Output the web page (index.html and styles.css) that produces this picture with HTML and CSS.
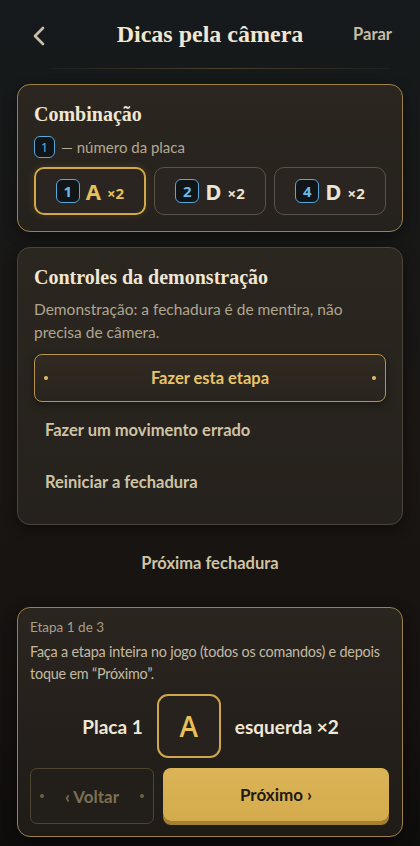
FILE: index.html
```html
<!DOCTYPE html>
<html lang="pt">
<head>
  <meta charset="UTF-8" />
  <title>Dicas pela câmera</title>
  <link rel="stylesheet" href="styles.css">
</head>
<body>
  <div class="screen">
    <header class="topbar">
      <button class="back-btn" aria-label="Voltar">
        <svg width="16" height="24" viewBox="0 0 16 24"><path d="M11 4 L3 12 L11 20" fill="none" stroke="#c9bfa6" stroke-width="2.6" stroke-linecap="round" stroke-linejoin="round"/></svg>
      </button>
      <h1>Dicas pela câmera</h1>
      <button class="stop-btn">Parar</button>
    </header>
    <div class="divider"></div>

    <main class="content">
      <section class="card card-gold combo-card">
        <h2>Combinação</h2>
        <div class="legend"><span class="badge badge-sm">1</span> — número da placa</div>
        <div class="choices">
          <button class="choice selected"><span class="badge">1</span><span class="letter">A</span><span class="times">×2</span></button>
          <button class="choice"><span class="badge">2</span><span class="letter">D</span><span class="times">×2</span></button>
          <button class="choice"><span class="badge">4</span><span class="letter">D</span><span class="times">×2</span></button>
        </div>
      </section>

      <section class="card demo-card">
        <h2>Controles da demonstração</h2>
        <p class="note">Demonstração: a fechadura é de mentira, não precisa de câmera.</p>
        <button class="outline-btn"><span class="dot"></span><span>Fazer esta etapa</span><span class="dot"></span></button>
        <button class="link-btn">Fazer um movimento errado</button>
        <button class="link-btn">Reiniciar a fechadura</button>
      </section>

      <button class="next-lock">Próxima fechadura</button>

      <section class="card card-gold step-card">
        <div class="step-count">Etapa 1 de 3</div>
        <p class="step-text">Faça a etapa inteira no jogo (todos os comandos) e depois toque em “Próximo”.</p>
        <div class="step-row">
          <span class="plate">Placa 1</span>
          <span class="key-box">A</span>
          <span class="dir">esquerda ×2</span>
        </div>
        <div class="nav-btns">
          <button class="prev-btn"><span class="dot dim"></span><span>‹ Voltar</span><span class="dot dim"></span></button>
          <button class="next-btn">Próximo ›</button>
        </div>
      </section>
    </main>
  </div>
</body>
</html>
```

FILE: styles.css
```css
body {
  margin: 0;
  font-family: Lato, "Liberation Sans", sans-serif;
  background: #121010;
  color: #efe6d3;
}

.screen {
  width: 420px;
  height: 846px;
  overflow: hidden;
  background: linear-gradient(180deg, #161a1c 0%, #171818 20%, #1a1613 55%, #141110 85%, #0f0d0c 100%);
}

button {
  font-family: inherit;
  background: none;
  border: none;
  padding: 0;
  cursor: pointer;
}

.topbar {
  display: grid;
  grid-template-columns: 60px 1fr 60px;
  align-items: center;
  height: 68px;
  padding: 0 14px 0 24px;
  box-sizing: border-box;
}

.back-btn {
  display: flex;
  align-items: center;
  height: 30px;
  padding-left: 8px;
  margin-top: 4px;
}

.topbar h1 {
  margin: 0;
  text-align: center;
  font-family: "Liberation Serif", serif;
  font-size: 24px;
  font-weight: bold;
  color: #efe6d3;
  padding-right: 10px;
}

.stop-btn {
  font-size: 16.5px;
  font-weight: bold;
  color: #c8bda2;
  text-align: right;
  padding-right: 14px;
}

.divider {
  height: 1px;
  margin: 0 30px 15px 50px;
  background: linear-gradient(90deg, rgba(120, 100, 60, 0.08), rgba(150, 125, 70, 0.4) 50%, rgba(120, 100, 60, 0.08));
}

.content {
  display: flex;
  flex-direction: column;
  padding: 0 17px;
}

.card {
  background: linear-gradient(180deg, #2b2620 0%, #25211c 100%);
  border: 1px solid #4b443a;
  border-radius: 13px;
  box-shadow: 0 4px 14px rgba(0, 0, 0, 0.45);
}

.card-gold {
  border-color: #9c8248;
}

.card h2 {
  margin: 0;
  font-family: "Liberation Serif", serif;
  font-size: 20px;
  line-height: 26px;
  font-weight: bold;
  color: #efe6d3;
}

.combo-card {
  padding: 16px 16px 16px;
}

.legend {
  display: flex;
  align-items: center;
  gap: 6px;
  margin-top: 9px;
  font-size: 15px;
  color: #b3a993;
}

.badge {
  display: inline-flex;
  align-items: center;
  justify-content: center;
  width: 24px;
  height: 24px;
  box-sizing: border-box;
  border: 1.5px solid #5aa7da;
  border-radius: 6px;
  background: #111518;
  color: #6db9ea;
  font-family: "Open Sans", sans-serif;
  font-size: 15px;
  font-weight: bold;
}

.badge-sm {
  width: 21px;
  height: 22px;
  font-size: 13px;
  font-weight: normal;
  color: #6db3e0;
}

.choices {
  display: grid;
  grid-template-columns: repeat(3, 1fr);
  gap: 8px;
  margin-top: 9px;
}

.choice {
  display: flex;
  align-items: center;
  justify-content: center;
  gap: 6px;
  height: 48px;
  border: 1px solid #5b5349;
  border-radius: 10px;
  background: #2a2520;
  color: #ece4d2;
}

.choice.selected {
  border: 2px solid #d3a948;
  color: #e8c05a;
  box-shadow: 0 0 8px rgba(211, 169, 72, 0.18);
}

.choice .letter {
  font-family: "Open Sans", sans-serif;
  font-size: 22px;
  font-weight: bold;
}

.choice .times {
  font-family: "Open Sans", sans-serif;
  font-size: 15px;
  font-weight: bold;
  margin-top: 3px;
}

.demo-card {
  display: flex;
  flex-direction: column;
  margin-top: 15px;
  padding: 16px 16px 18px;
}

.note {
  margin: 8px 0 0;
  font-size: 15.5px;
  line-height: 23px;
  color: #b0a690;
  padding-right: 20px;
}

.outline-btn {
  display: flex;
  align-items: center;
  justify-content: space-between;
  height: 48px;
  margin-top: 10px;
  padding: 0 9px;
  border: 1.5px solid #b4944f;
  border-radius: 8px;
  background: linear-gradient(180deg, #302a22, #29241e);
  color: #e8c46a;
  font-size: 16.5px;
  font-weight: bold;
  box-shadow: 0 3px 8px rgba(0, 0, 0, 0.35);
}

.dot {
  width: 4px;
  height: 4px;
  border-radius: 50%;
  background: #e2bf66;
}

.dot.dim {
  background: #6e6246;
}

.link-btn {
  height: 48px;
  margin-top: 4px;
  padding-left: 11px;
  text-align: left;
  font-size: 16.5px;
  font-weight: bold;
  color: #cfc3a5;
}

.link-btn:first-of-type {
  margin-top: 6px;
}

.next-lock {
  height: 48px;
  margin: 14px 0 20px;
  font-size: 16.5px;
  font-weight: bold;
  color: #cfc3a5;
}

.step-card {
  padding: 10px 11px 8px 12px;
  background: linear-gradient(180deg, #2a251f 0%, #1f1b17 100%);
}

.step-count {
  font-size: 13.5px;
  line-height: 18px;
  color: #a89e8a;
}

.step-text {
  margin: 5px 0 0;
  font-size: 14.4px;
  letter-spacing: -0.2px;
  line-height: 22px;
  color: #c4b9a3;
}

.step-row {
  display: flex;
  align-items: center;
  justify-content: center;
  gap: 14px;
  margin-top: 9px;
}

.plate, .dir {
  font-size: 19px;
  font-weight: bold;
  color: #f0e8d5;
}

.key-box {
  display: flex;
  align-items: center;
  justify-content: center;
  width: 64px;
  height: 64px;
  box-sizing: border-box;
  border: 2px solid #cfa64b;
  border-radius: 11px;
  background: #27221d;
  color: #e8c05a;
  font-family: "Open Sans", sans-serif;
  font-size: 28px;
  font-weight: 600;
}

.nav-btns {
  display: grid;
  grid-template-columns: 124px 1fr;
  gap: 9px;
  margin-top: 10px;
  margin-right: 2px;
  padding-bottom: 4px;
}

.prev-btn {
  display: flex;
  align-items: center;
  justify-content: space-between;
  height: 56px;
  padding: 0 9px;
  border: 1px solid #50462f;
  border-radius: 7px;
  background: #221e19;
  color: #7c6f52;
  font-size: 17px;
  font-weight: bold;
}

.next-btn {
  height: 53px;
  border-radius: 8px;
  background: linear-gradient(180deg, #dbb457, #d4ab4c);
  box-shadow: 0 4px 0 #a5802f;
  color: #1f1a14;
  font-size: 17px;
  font-weight: bold;
}
```
